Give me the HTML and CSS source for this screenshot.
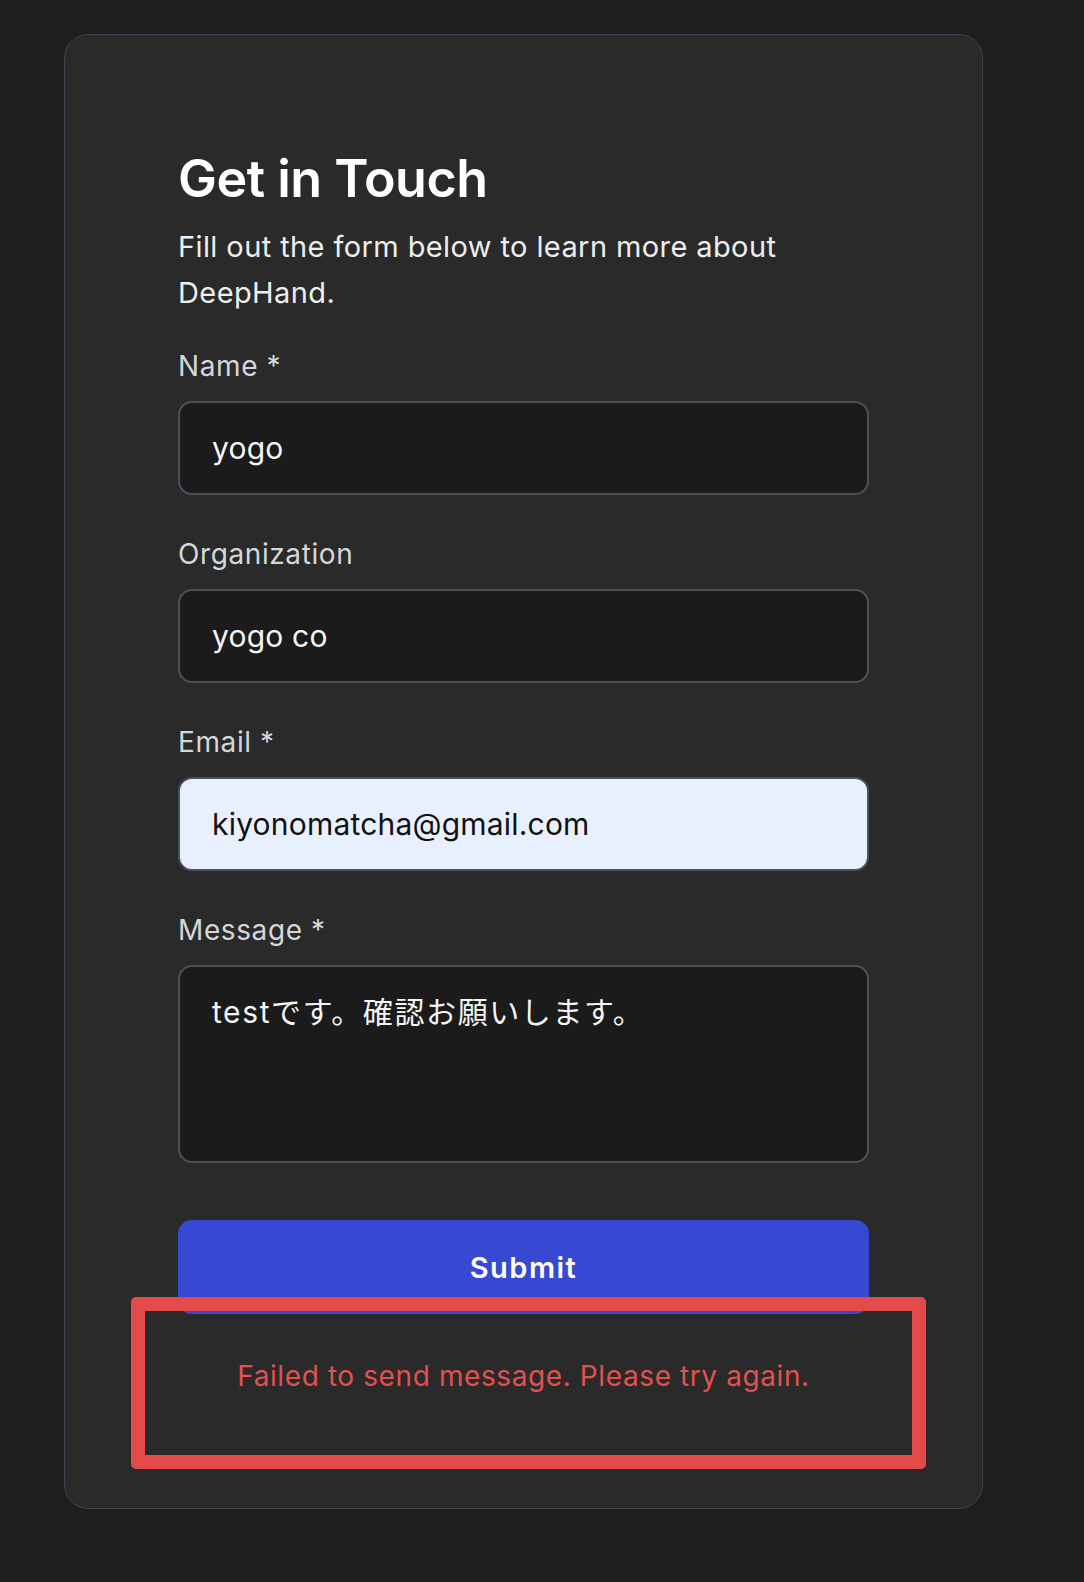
FILE: index.html
```html
<!DOCTYPE html>
<html lang="ja">
<head>
<meta charset="utf-8">
<title>Get in Touch</title>
<link rel="stylesheet" href="styles.css">
</head>
<body>
<main class="card">
  <h1 class="title">Get in Touch</h1>
  <p class="lead">Fill out the form below to learn more about DeepHand.</p>
  <form class="form">
    <div class="field">
      <label class="label" for="name">Name *</label>
      <input class="input" id="name" type="text" value="yogo">
    </div>
    <div class="field">
      <label class="label" for="org">Organization</label>
      <input class="input" id="org" type="text" value="yogo co">
    </div>
    <div class="field">
      <label class="label" for="email">Email *</label>
      <input class="input input-autofill" id="email" type="email" value="kiyonomatcha@gmail.com">
    </div>
    <div class="field field-last">
      <label class="label" for="msg">Message *</label>
      <textarea class="input textarea" id="msg">testです。確認お願いします。</textarea>
    </div>
    <button class="submit" type="button">Submit</button>
    <div class="status">
      <p class="error">Failed to send message. Please try again.</p>
      <div class="highlight"></div>
    </div>
  </form>
</main>
</body>
</html>
```

FILE: styles.css
```css
* {
  box-sizing: border-box;
}

html, body {
  margin: 0;
  padding: 0;
  background: #1e1e1e;
}

body {
  font-family: "Inter", "Noto Sans CJK JP", sans-serif;
  color: #ffffff;
  padding: 34px 0 74px 64px;
}

.card {
  width: 919px;
  background: #2a2a2a;
  border: 1px solid #3c4352;
  border-radius: 24px;
  padding: 113px 113px 112px 113px;
}

.title {
  margin: 0;
  font-size: 52px;
  line-height: 62px;
  font-weight: 600;
  letter-spacing: -0.5px;
  color: #ffffff;
}

.lead {
  margin: 14px 0 0 0;
  font-size: 29px;
  line-height: 46px;
  font-weight: 400;
  letter-spacing: 0.4px;
  color: #eeeeee;
}

.form {
  margin-top: 30px;
  display: flex;
  flex-direction: column;
}

.field {
  display: flex;
  flex-direction: column;
  gap: 15px;
  margin-bottom: 39px;
}

.field-last {
  margin-bottom: 57px;
}

.label {
  font-size: 28px;
  line-height: 40px;
  letter-spacing: 0.6px;
  color: #d4d7dc;
}

.input {
  display: block;
  width: 100%;
  height: 94px;
  margin: 0;
  padding: 0 32px;
  background: #1b1b1b;
  border: 2px solid #4a505c;
  border-radius: 14px;
  font-family: "Inter", "Noto Sans CJK JP", sans-serif;
  font-size: 30px;
  line-height: 40px;
  letter-spacing: 0.2px;
  color: #f5f5f5;
  outline: none;
}

.input-autofill {
  background: #e8f0fe;
  color: #111111;
}

.textarea {
  height: 198px;
  padding: 25px 32px;
  letter-spacing: 1.6px;
  resize: none;
}

.submit {
  display: block;
  width: 100%;
  height: 94px;
  margin: 0;
  border: none;
  border-radius: 14px;
  background: #3748d3;
  color: #ffffff;
  font-family: "Inter", "Noto Sans CJK JP", sans-serif;
  font-size: 29px;
  font-weight: 600;
  letter-spacing: 1.5px;
}

.status {
  position: relative;
  margin-top: 42px;
}

.error {
  margin: 0;
  text-align: center;
  font-size: 28px;
  line-height: 40px;
  letter-spacing: 0.6px;
  color: #e0524f;
}

.highlight {
  position: absolute;
  top: -59px;
  left: -47px;
  right: -57px;
  bottom: -73px;
  border: 14px solid #e34b4b;
  border-radius: 5px;
  pointer-events: none;
}
```
